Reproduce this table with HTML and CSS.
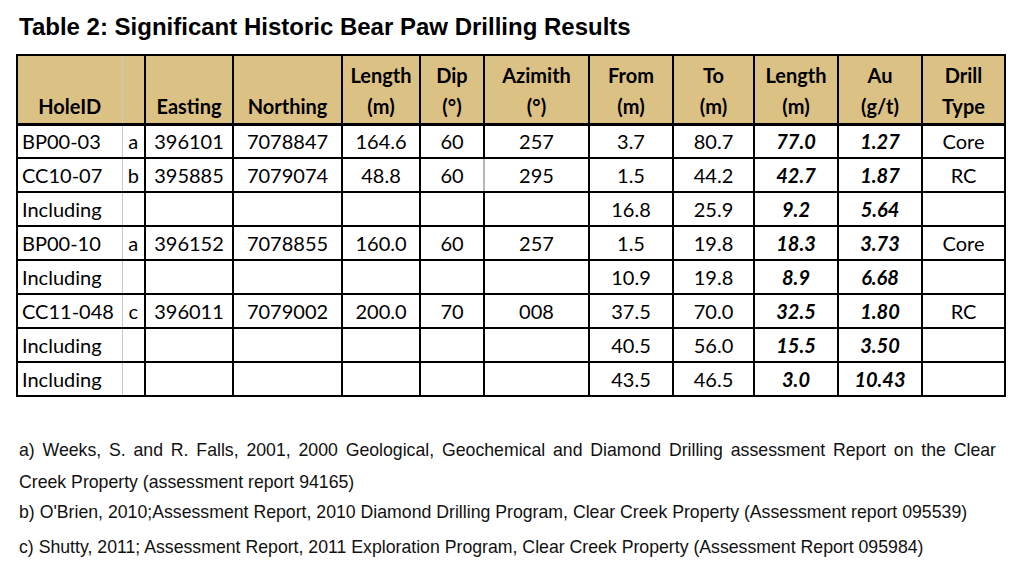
FILE: index.html
```html
<!DOCTYPE html>
<html>
<head>
<meta charset="utf-8">
<link rel="stylesheet" href="styles.css">
</head>
<body>
<div class="page">
  <h1 class="title">Table 2: Significant Historic Bear Paw Drilling Results</h1>
  <table class="results">
    <colgroup>
      <col style="width:105px"><col style="width:23px"><col style="width:88px"><col style="width:109px">
      <col style="width:78px"><col style="width:64px"><col style="width:105px"><col style="width:84px">
      <col style="width:81px"><col style="width:84px"><col style="width:84px"><col style="width:83px">
    </colgroup>
    <thead>
      <tr>
        <th class="hole">HoleID</th><th class="ref"></th><th>Easting</th><th>Northing</th>
        <th>Length<br>(m)</th><th>Dip<br>(°)</th><th>Azimith<br>(°)</th><th>From<br>(m)</th>
        <th>To<br>(m)</th><th>Length<br>(m)</th><th>Au<br>(g/t)</th><th>Drill<br>Type</th>
      </tr>
    </thead>
    <tbody>
      <tr><td class="hole">BP00-03</td><td class="ref">a</td><td>396101</td><td>7078847</td><td>164.6</td><td>60</td><td>257</td><td>3.7</td><td>80.7</td><td class="hl">77.0</td><td class="hl">1.27</td><td>Core</td></tr>
      <tr><td class="hole">CC10-07</td><td class="ref">b</td><td>395885</td><td>7079074</td><td>48.8</td><td class="soft">60</td><td>295</td><td>1.5</td><td>44.2</td><td class="hl">42.7</td><td class="hl">1.87</td><td>RC</td></tr>
      <tr><td class="hole">Including</td><td class="ref"></td><td></td><td></td><td></td><td></td><td></td><td>16.8</td><td>25.9</td><td class="hl">9.2</td><td class="hl">5.64</td><td></td></tr>
      <tr><td class="hole">BP00-10</td><td class="ref">a</td><td>396152</td><td>7078855</td><td>160.0</td><td>60</td><td>257</td><td>1.5</td><td>19.8</td><td class="hl">18.3</td><td class="hl">3.73</td><td>Core</td></tr>
      <tr><td class="hole">Including</td><td class="ref"></td><td></td><td></td><td></td><td></td><td></td><td>10.9</td><td>19.8</td><td class="hl">8.9</td><td class="hl">6.68</td><td></td></tr>
      <tr><td class="hole">CC11-048</td><td class="ref">c</td><td>396011</td><td>7079002</td><td>200.0</td><td>70</td><td>008</td><td>37.5</td><td>70.0</td><td class="hl">32.5</td><td class="hl">1.80</td><td>RC</td></tr>
      <tr><td class="hole">Including</td><td class="ref"></td><td></td><td></td><td></td><td></td><td></td><td>40.5</td><td>56.0</td><td class="hl">15.5</td><td class="hl">3.50</td><td></td></tr>
      <tr><td class="hole">Including</td><td class="ref"></td><td></td><td></td><td></td><td></td><td></td><td>43.5</td><td>46.5</td><td class="hl">3.0</td><td class="hl">10.43</td><td></td></tr>
    </tbody>
  </table>
  <div class="notes">
    <p class="note note-a">a) Weeks, S. and R. Falls, 2001, 2000 Geological, Geochemical and Diamond Drilling assessment Report on the Clear Creek Property (assessment report 94165)</p>
    <p class="note note-b">b) O'Brien, 2010;Assessment Report, 2010 Diamond Drilling Program, Clear Creek Property (Assessment report 095539)</p>
    <p class="note note-c">c) Shutty, 2011; Assessment Report, 2011 Exploration Program, Clear Creek Property (Assessment Report 095984)</p>
  </div>
</div>
</body>
</html>
```

FILE: styles.css
```css
html, body {
  margin: 0;
  padding: 0;
  background: #ffffff;
}

.page {
  width: 1024px;
  height: 575px;
  padding: 0 0 0 16px;
  box-sizing: border-box;
  overflow: hidden;
}

.title {
  margin: 0;
  padding: 12px 0 0 3px;
  height: 40px;
  box-sizing: border-box;
  font-family: "Liberation Sans", Arial, sans-serif;
  font-weight: bold;
  font-size: 24px;
  line-height: 30px;
  color: #000;
}

.results {
  margin-top: 14px;
  width: 990px;
  table-layout: fixed;
  border-collapse: collapse;
  font-family: Lato, "Open Sans", sans-serif;
  font-size: 20px;
  color: #000;
}

.results th,
.results td {
  border: 2px solid #000;
  padding: 0;
  text-align: center;
  white-space: nowrap;
  overflow: hidden;
}

.results thead tr {
  height: 69px;
}

.results th {
  background: #dcc185;
  font-weight: bold;
  line-height: 31px;
  vertical-align: bottom;
  padding-bottom: 1px;
  border-bottom-width: 3px;
}

.results tbody tr {
  height: 34px;
}

.results td {
  vertical-align: middle;
  line-height: 24px;
}

.results .hole {
  text-align: left;
  padding-left: 4px;
  border-right: 1px solid #c8c8c8;
}

.results th.hole {
  text-align: center;
  padding-left: 0;
}

.results .ref {
  border-left: 1px solid #c8c8c8;
}

.results .soft {
  border-right-color: #b8b8b8;
}

.results .hl {
  font-weight: bold;
  font-style: italic;
}

.notes {
  margin-top: 37px;
  width: 977px;
  padding-left: 3px;
  font-family: "Liberation Sans", Arial, sans-serif;
  font-size: 17.7px;
  color: #111;
}

.note {
  margin: 0;
  line-height: 32px;
  text-align: justify;
}

.note-b {
  margin-top: -2px;
}

.note-c {
  margin-top: 3px;
}
```
